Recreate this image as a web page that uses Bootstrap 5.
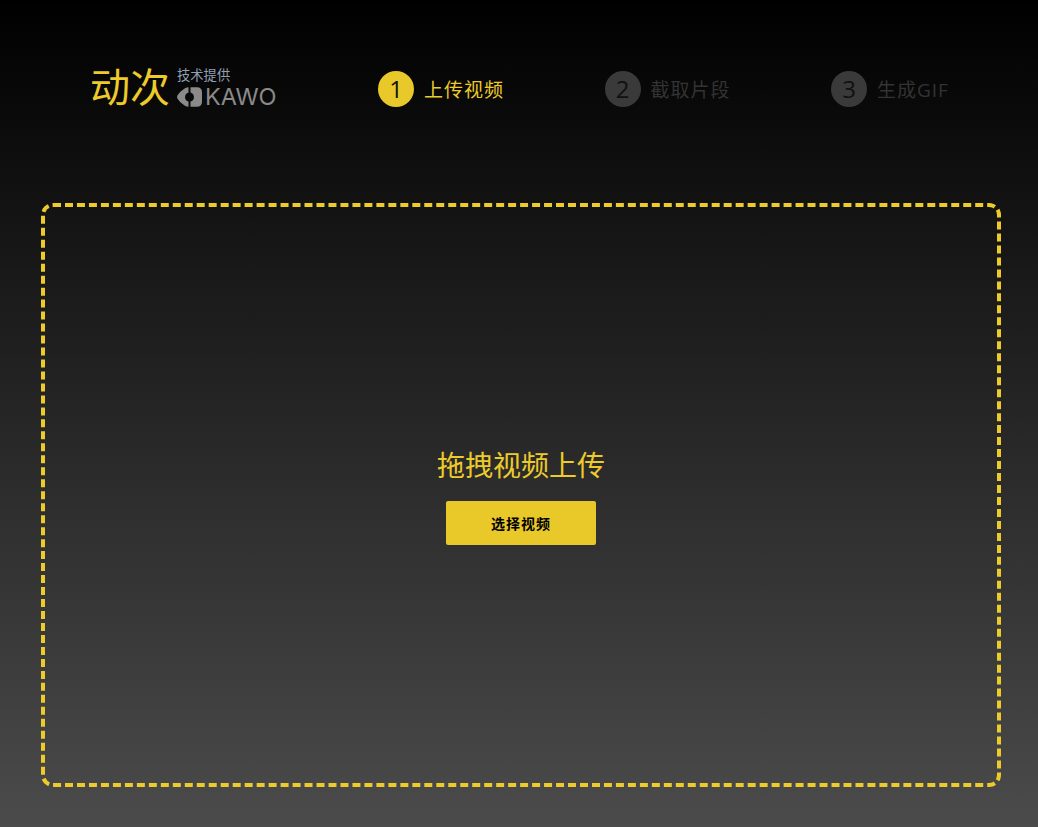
<!DOCTYPE html>
<html lang="zh">
<head>
<meta charset="utf-8">
<title>动次</title>
<link href="https://cdn.jsdelivr.net/npm/bootstrap@5.3.0/dist/css/bootstrap.min.css" rel="stylesheet">
<style>
html,body{height:100%}
body{background:linear-gradient(180deg,#000 0,#4b4b4b 100%);font-family:"Open Sans","Noto Sans CJK SC",sans-serif;overflow:hidden}
.shell{width:960px;margin-left:41px;height:827px;padding-top:60px}
.topbar{height:60px;padding-left:49px}
.brand{width:288px;flex:none;color:#edcb2a}
.brand-name{font-size:40px;line-height:54px;width:87px;flex:none}
.brand-by{font-size:13.3px;line-height:16px;color:#8f9fb4;margin-top:-1px;white-space:nowrap}
.kawo{font-family:"Inter","Open Sans",sans-serif;font-size:23.5px;line-height:20px;color:#8a8a8a;letter-spacing:-.1px;margin-top:4px}
.kawo svg{margin-right:3px;flex:none}
.step{flex:none;width:226.5px;padding-top:11px;font-size:19px;letter-spacing:1px;color:#333}
.step:last-child{width:auto}
.step-num{width:36px;height:36px;border-radius:50%;background:#3a3a3a;color:#111;font-size:24px;letter-spacing:0;line-height:36px;text-align:center;margin-right:10px}
.step-text{padding-top:2px}
.step-on{color:#edcb2a}
.step-on .step-num{background:#e9c829}
.dropbox{height:584px;margin-top:83px;border:4px dashed #edcb2a;border-radius:12px}
.drop-title{font-size:28px;line-height:38px;color:#edcb2a;margin-bottom:17px;margin-top:1px}
.pick{width:150px;height:44px;background:#e9c829;border:0;border-radius:2px;color:#000;font-size:14px;font-weight:700;padding:0;letter-spacing:1px}
.pick:hover,.pick:active{background:#e9c829!important;color:#000!important}
</style>
</head>
<body>
<div class="shell">
  <div class="topbar d-flex">
    <div class="brand d-flex">
      <div class="brand-name">动次</div>
      <div class="pt-2">
        <div class="brand-by">技术提供</div>
        <div class="kawo d-flex align-items-center">
          <svg width="25" height="20" viewBox="0 0 25 20" aria-hidden="true"><path fill="#8a8a8a" d="M11.5 .3V5.4A4.8 4.8 0 0 0 11.5 14.6V19.7C7 19.5 1.5 13.5 .3 11.2 0 10.4 0 9.6 .3 8.8 1.5 6.5 7 .5 11.5 .3ZM13.5 .3H20C23 .3 25 2 25 5V15C25 18 23 19.7 20 19.7H13.5V14.6A4.8 4.8 0 0 0 13.5 5.4Z"/></svg>
          <span>KAWO</span>
        </div>
      </div>
    </div>
    <div class="step step-on d-flex align-items-center align-self-start"><span class="step-num">1</span><span class="step-text">上传视频</span></div>
    <div class="step d-flex align-items-center align-self-start"><span class="step-num">2</span><span class="step-text">截取片段</span></div>
    <div class="step d-flex align-items-center align-self-start"><span class="step-num">3</span><span class="step-text">生成GIF</span></div>
  </div>
  <div class="dropbox d-flex flex-column align-items-center justify-content-center">
    <div class="drop-title">拖拽视频上传</div>
    <button type="button" class="btn pick">选择视频</button>
  </div>
</div>
<script src="https://cdn.jsdelivr.net/npm/bootstrap@5.3.0/dist/js/bootstrap.bundle.min.js"></script>
</body>
</html>
